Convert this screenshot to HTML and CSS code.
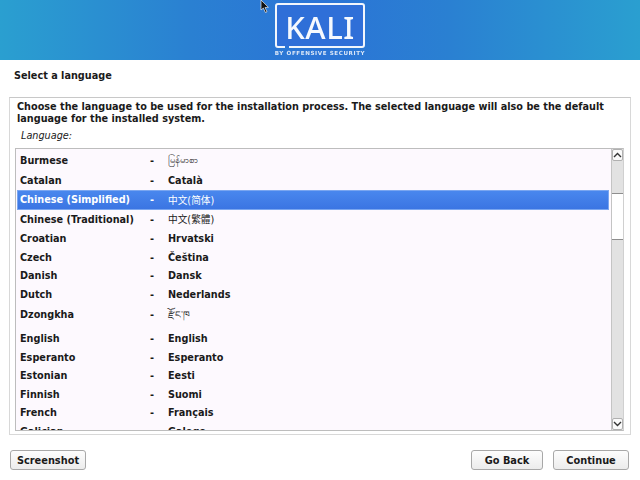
FILE: index.html
```html
<!DOCTYPE html>
<html lang="en">

<head>
  <meta charset="UTF-8" />
  <title>Select a language</title>
  <link rel="stylesheet" href="styles.css">
</head>

<body>
  <div class="banner">
    <div class="logo">
      <div class="logo-box">KALI</div>
      <div class="logo-sub">BY OFFENSIVE SECURITY</div>
    </div>
  </div>

  <svg class="cursor" width="10" height="14" viewBox="0 0 10 14">
    <path d="M1 0 L1 10 L3.4 8 L5.4 12.5 L7 11.8 L5 7.5 L8.4 7.3 Z" fill="#111" stroke="#eee" stroke-width="0.7" />
  </svg>

  <h2 class="page-title">Select a language</h2>

  <div class="panel">
    <p class="intro">Choose the language to be used for the installation process. The selected language will also be the default language for the installed system.</p>
    <div class="field-label">Language:</div>

    <div class="listbox">
      <div class="rows">
        <div class="row tall"><span>Burmese</span><span>-</span><span class="thin">မြန်မာစာ</span></div>
        <div class="row mid"><span>Catalan</span><span>-</span><span>Català</span></div>
        <div class="row mid selected"><span>Chinese (Simplified)</span><span>-</span><span class="thin">中文(简体)</span></div>
        <div class="row mid"><span>Chinese (Traditional)</span><span>-</span><span class="thin">中文(繁體)</span></div>
        <div class="row"><span>Croatian</span><span>-</span><span>Hrvatski</span></div>
        <div class="row"><span>Czech</span><span>-</span><span>Čeština</span></div>
        <div class="row"><span>Danish</span><span>-</span><span>Dansk</span></div>
        <div class="row"><span>Dutch</span><span>-</span><span>Nederlands</span></div>
        <div class="row big"><span>Dzongkha</span><span>-</span><span class="thin">རྫོང་ཁ</span></div>
        <div class="row"><span>English</span><span>-</span><span>English</span></div>
        <div class="row"><span>Esperanto</span><span>-</span><span>Esperanto</span></div>
        <div class="row"><span>Estonian</span><span>-</span><span>Eesti</span></div>
        <div class="row"><span>Finnish</span><span>-</span><span>Suomi</span></div>
        <div class="row"><span>French</span><span>-</span><span>Français</span></div>
        <div class="row"><span>Galician</span><span>-</span><span>Galego</span></div>
      </div>

      <div class="scrollbar">
        <div class="arrow up">
          <svg width="9" height="6" viewBox="0 0 9 6"><path d="M1 5 L4.5 1.5 L8 5" fill="none" stroke="#333" stroke-width="1.4" /></svg>
        </div>
        <div class="track">
          <div class="thumb"></div>
        </div>
        <div class="arrow down">
          <svg width="9" height="6" viewBox="0 0 9 6"><path d="M1 1 L4.5 4.5 L8 1" fill="none" stroke="#333" stroke-width="1.4" /></svg>
        </div>
      </div>
    </div>
  </div>

  <div class="footer">
    <button class="btn">Screenshot</button>
    <div class="footer-right">
      <button class="btn back">Go Back</button>
      <button class="btn">Continue</button>
    </div>
  </div>
</body>

</html>
```

FILE: styles.css
```css
/* Base */
* {
  box-sizing: border-box;
  margin: 0;
  padding: 0;
}

body {
  width: 640px;
  height: 480px;
  overflow: hidden;
  position: relative;
  background-color: #fff;
  font-family: 'DejaVu Sans', 'Noto Sans CJK SC', sans-serif;
  font-size: 9.7px;
  font-weight: 700;
  color: #1a1a1a;
}

/* Banner */
.banner {
  height: 60px;
  display: flex;
  justify-content: center;
  background: linear-gradient(90deg, #2a9fd0 0%, #2a80d2 30%, #2b74d6 50%, #2a80d2 70%, #2a9fd0 100%);
}

.logo {
  width: 90px;
  padding-top: 3px;
  display: flex;
  flex-direction: column;
  align-items: center;
  filter: blur(0.3px);
}

.logo-box {
  position: relative;
  width: 90px;
  height: 45px;
  border: 2px solid #f2f6fc;
  border-radius: 3px;
  background-color: #2f6fd8;
  color: #f6f9fe;
  font-family: 'Noto Sans', sans-serif;
  font-size: 31px;
  font-weight: 500;
  line-height: 44px;
  letter-spacing: 0.5px;
  text-align: center;
}

/* notch in the bottom edge of the logo frame */
.logo-box::after {
  content: '';
  position: absolute;
  left: 8px;
  bottom: -2px;
  width: 4px;
  height: 2px;
  background-color: #2b74d6;
}

.logo-sub {
  margin-top: 2px;
  color: #dbe7f7;
  font-size: 5.6px;
  font-weight: 700;
  letter-spacing: 0.6px;
  white-space: nowrap;
}

.cursor {
  position: absolute;
  top: 0;
  left: 260px;
}

/* Title */
.page-title {
  font-size: inherit;
  font-weight: 700;
  line-height: 14px;
  padding: 9px 0 0 14px;
  height: 37px;
}

/* Panel */
.panel {
  width: 622px;
  height: 338px;
  margin-left: 9px;
  padding: 3px 6px 3px 5px;
  border: 1px solid #d8d8d8;
  border-top-color: #c8c8c8;
}

.intro {
  line-height: 12px;
  padding-left: 2px;
}

.field-label {
  font-weight: 400;
  font-style: italic;
  line-height: 14px;
  margin: 4px 0 5px 6px;
}

/* List */
.listbox {
  height: 283px;
  display: flex;
  border: 1px solid #bdbdbd;
  border-right-color: #d0d0d0;
  background-color: #fdf9fe;
}

.rows {
  flex: 1;
  overflow: hidden;
  padding: 1px 2px 0 1px;
}

.row {
  height: 18.5px;
  display: grid;
  grid-template-columns: 130px 18px 1fr;
  align-items: center;
  padding-left: 3px;
}

.row.mid {
  height: 19.7px;
}

.row.tall {
  height: 20.2px;
}

.row.big {
  height: 26px;
  padding-top: 6px;
  align-items: start;
  line-height: 12px;
}

.row.selected {
  background: linear-gradient(180deg, #4a88ee 0%, #3a74e2 100%);
  color: #fff;
  box-shadow: inset 0 0 0 1px #7aa6f0;
}

.thin {
  font-weight: 400;
}

/* Scrollbar */
.scrollbar {
  width: 12px;
  display: flex;
  flex-direction: column;
  background-color: #e2e2e2;
  border-left: 1px solid #c4c4c4;
}

.arrow {
  height: 12px;
  display: flex;
  align-items: center;
  justify-content: center;
  background-color: #fafafa;
  border: 1px solid #b0b0b0;
  border-radius: 2px;
}

.track {
  flex: 1;
  padding-top: 32px;
}

.thumb {
  height: 47px;
  background-color: #fff;
  border-top: 1px solid #8e8e8e;
  border-bottom: 1px solid #8e8e8e;
}

/* Footer */
.footer {
  display: flex;
  justify-content: space-between;
  padding: 15px 11px 0 10px;
}

.footer-right {
  display: flex;
  gap: 10px;
}

.btn {
  width: 76px;
  height: 20px;
  border: 1px solid #a8a8a8;
  border-radius: 3px;
  background: linear-gradient(180deg, #fdfdfd 0%, #ececec 100%);
  font-family: inherit;
  font-size: 9.8px;
  font-weight: 700;
  color: #1a1a1a;
}

.btn.back {
  width: 72px;
}
```
